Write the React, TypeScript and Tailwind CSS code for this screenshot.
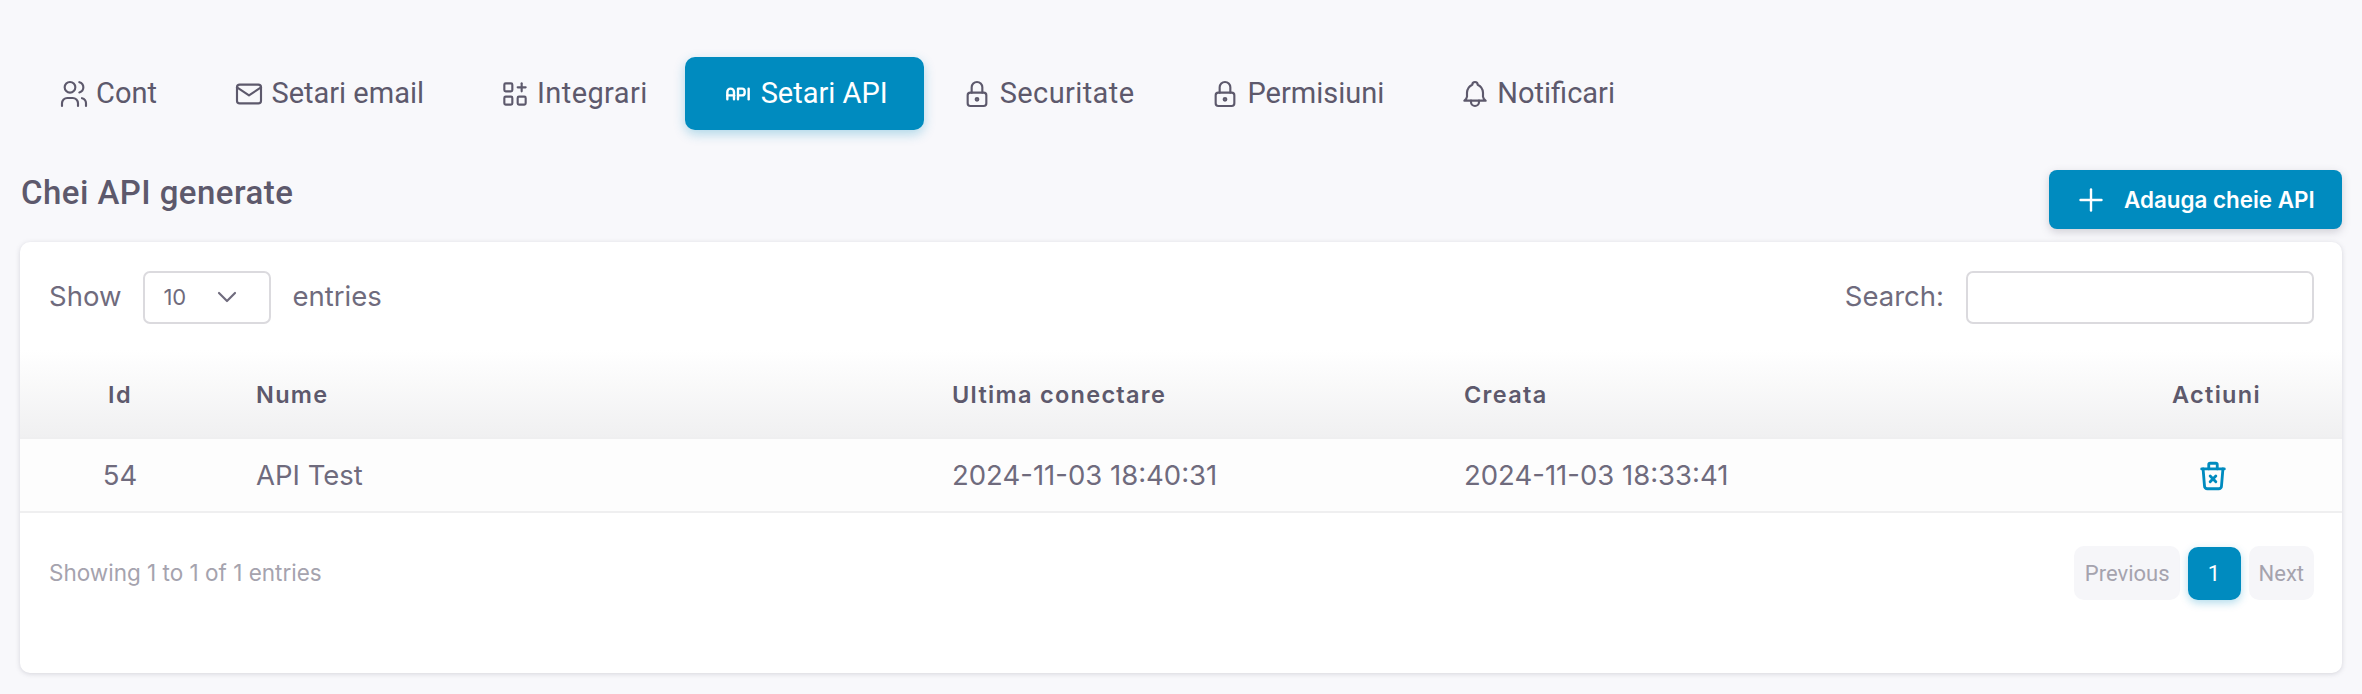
import type { ReactNode } from 'react';
import { TbApi, TbApps, TbBell, TbChevronDown, TbLock, TbMail, TbPlus, TbTrashX, TbUsers } from 'react-icons/tb';

const tabs: { label: string; icon: ReactNode; active?: boolean; pad?: string; text?: string }[] = [
  { label: 'Cont', icon: <TbUsers size={32} strokeWidth={1.6} />, pad: 'pr-[38.5px]' },
  { label: 'Setari email', icon: <TbMail size={32} strokeWidth={1.6} /> },
  { label: 'Integrari', icon: <TbApps size={32} strokeWidth={1.6} />, text: 'tracking-[0.4px]' },
  { label: 'Setari API', icon: <TbApi size={32} strokeWidth={1.8} />, active: true, pad: 'pr-[36px]' },
  { label: 'Securitate', icon: <TbLock size={32} strokeWidth={1.6} />, text: 'tracking-[0.4px]' },
  { label: 'Permisiuni', icon: <TbLock size={32} strokeWidth={1.6} /> },
  { label: 'Notificari', icon: <TbBell size={32} strokeWidth={1.6} /> },
];

function Tab({ label, icon, active, pad = 'pr-[37px]', text = '' }: { label: string; icon: ReactNode; active?: boolean; pad?: string; text?: string }) {
  return (
    <div
      className={
        (active
          ? 'rounded-[10px] bg-[#008bbf] text-white shadow-[0_4px_12px_rgba(0,139,191,0.3)] '
          : 'text-[#5d596c] ') + 'flex h-[73px] items-center gap-[6.5px] pl-[37.5px] ' + pad
      }
    >
      {icon}
      <span className={'text-[29px] leading-none ' + text}>{label}</span>
    </div>
  );
}

export default function App() {
  return (
    <div className="h-[694px] w-[2362px] overflow-hidden bg-[#f8f8fb] px-[20px] pt-[57px] font-['Roboto',sans-serif] text-[#5d596c]">
      <div className="flex">
        {tabs.map((t) => (
          <Tab key={t.label} {...t} />
        ))}
      </div>

      <div className="mt-[40px] flex items-start justify-between">
        <h4 className="ml-[1px] mt-[3px] text-[33px] font-medium leading-[40px] tracking-[0.45px]">Chei API generate</h4>
        <button className="flex h-[59px] w-[293px] items-center gap-[15px] rounded-[8px] bg-[#008bbf] pl-[24px] font-['Inter',sans-serif] text-[22.4px] font-semibold text-white shadow-[0_3px_8px_rgba(93,89,108,0.25)]">
          <TbPlus size={36} strokeWidth={1.6} />
          Adauga cheie API
        </button>
      </div>

      <div className="mt-[13px] h-[431px] rounded-[10px] bg-white font-['Inter',sans-serif] shadow-[0_1px_5px_rgba(93,89,108,0.22)]">
        <div className="flex h-[108px] items-center justify-between pl-[29px] pr-[28px] pt-[2px] text-[27.5px] text-[#6f6b7d]">
          <div className="flex items-center">
            <span>Show</span>
            <div className="ml-[22px] flex h-[53px] w-[128px] items-center gap-[25px] rounded-[7px] border-2 border-[#dbdade] pl-[18px] text-[22px]">
              10
              <TbChevronDown size={32} strokeWidth={1.6} />
            </div>
            <span className="ml-[21px]">entries</span>
          </div>
          <div className="flex items-center">
            <span>Search:</span>
            <div className="ml-[22px] h-[53px] w-[348px] rounded-[7px] border-2 border-[#dbdade]" />
          </div>
        </div>

        <table className="w-full table-fixed border-collapse">
          <colgroup>
            <col className="w-[200px]" />
            <col className="w-[711px]" />
            <col className="w-[513px]" />
            <col className="w-[640px]" />
            <col />
          </colgroup>
          <thead>
            <tr className="h-[88px] bg-gradient-to-b from-white to-[#f0f0f1] text-[23.5px] tracking-[1.3px] text-[#5d596c]">
              <th className="pt-[3px] text-center font-semibold">Id</th>
              <th className="pl-[36px] pt-[3px] text-left font-semibold">Nume</th>
              <th className="pl-[21px] pt-[3px] text-left font-semibold">Ultima conectare</th>
              <th className="pl-[20px] pt-[3px] text-left font-semibold">Creata</th>
              <th className="pl-[7px] pt-[3px] text-center font-semibold">Actiuni</th>
            </tr>
          </thead>
          <tbody>
            <tr className="h-[74px] border-y-2 border-[#efeff0] bg-[#fdfdfd] text-[27.5px] text-[#6f6b7d]">
              <td className="pt-[2px] text-center">54</td>
              <td className="pl-[36px] pt-[2px]">API Test</td>
              <td className="pl-[21px] pt-[2px]">2024-11-03 18:40:31</td>
              <td className="pl-[20px] pt-[2px]">2024-11-03 18:33:41</td>
              <td className="pt-[2px]">
                <div className="flex justify-center text-[#008bbf]">
                  <TbTrashX size={34} strokeWidth={2} />
                </div>
              </td>
            </tr>
          </tbody>
        </table>

        <div className="flex items-center justify-between pl-[29px] pr-[28px] pt-[33px]">
          <span className="text-[22.5px] text-[#a5a3ae]">Showing 1 to 1 of 1 entries</span>
          <div className="flex items-center gap-[8px] font-['Roboto',sans-serif] text-[22px] text-[#a5a3ae]">
            <span className="flex h-[54px] items-center rounded-[10px] bg-[#f6f6f9] pl-[11px] pr-[10px]">Previous</span>
            <span className="flex h-[53px] w-[53px] items-center justify-center rounded-[10px] bg-[#008bbf] text-white shadow-[0_3px_8px_rgba(0,139,191,0.3)]">1</span>
            <span className="flex h-[54px] items-center rounded-[10px] bg-[#f6f6f9] px-[10px]">Next</span>
          </div>
        </div>
      </div>
    </div>
  );
}
